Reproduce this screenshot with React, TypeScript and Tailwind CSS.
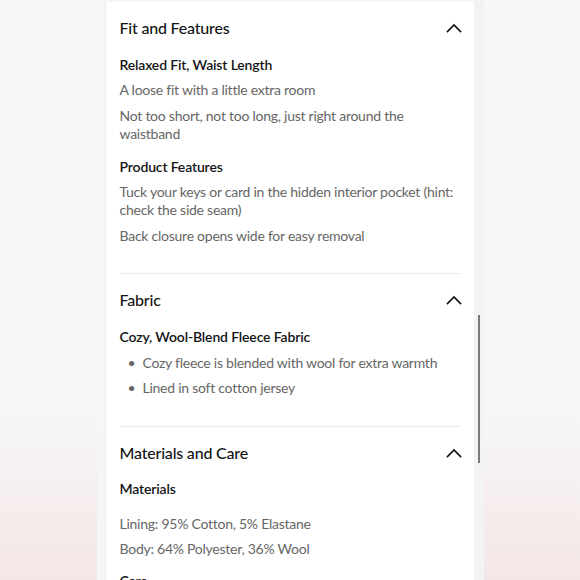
import React from "react";

function Chevron() {
  return (
    <svg width="16" height="10" viewBox="0 0 16 10" fill="none" className="shrink-0">
      <path d="M1.5 8.5 L8 2 L14.5 8.5" stroke="#111" strokeWidth="1.6" strokeLinecap="square" />
    </svg>
  );
}

function Header({ title, mt }: { title: string; mt: string }) {
  return (
    <div className={`flex items-center justify-between h-[24px] ${mt}`}>
      <span className="text-[16px] leading-[24px] font-medium tracking-[-0.2px] text-[#141414]">{title}</span>
      <span className="-mr-[2px]">
        <Chevron />
      </span>
    </div>
  );
}

const body = "text-[14px] leading-[18px] tracking-[-0.25px] text-[#666]";
const sub = "text-[14px] leading-[20px] font-semibold tracking-[-0.15px] text-[#141414]";

export default function App() {
  const font = { fontFamily: "Lato, 'Noto Sans', sans-serif" };
  return (
    <div
      className="w-[580px] h-[580px] overflow-hidden flex justify-center bg-[linear-gradient(180deg,#f8f8f8_0%,#f7f7f7_70%,#f4e6e6_100%)]"
      style={font}
    >
      <div className="w-[387px] h-full flex bg-[#f6f6f6] pl-[8px]">
        <div className="w-[369px] h-full mt-[2px] bg-white border-l border-[#ececec] px-[14px] shrink-0">
          <Header title="Fit and Features" mt="mt-[14px]" />
          <div className={`mt-[15px] ${sub}`}>Relaxed Fit, Waist Length</div>
          <p className={`mt-[6px] ${body}`}>A loose fit with a little extra room</p>
          <p className={`mt-[8px] ${body}`}>Not too short, not too long, just right around the waistband</p>
          <div className={`mt-[14px] ${sub}`}>Product Features</div>
          <p className={`mt-[6px] ${body}`}>Tuck your keys or card in the hidden interior pocket (hint: check the side seam)</p>
          <p className={`mt-[8px] ${body}`}>Back closure opens wide for easy removal</p>
          <div className="mt-[28px] h-px bg-[#ebebeb]" />

          <Header title="Fabric" mt="mt-[14px]" />
          <div className={`mt-[15px] ${sub}`}>Cozy, Wool-Blend Fleece Fabric</div>
          <ul className="mt-[7px] flex flex-col gap-[7px]">
            <li className={`flex ${body}`}>
              <span className="w-[23px] pl-[8px]">•</span>Cozy fleece is blended with wool for extra warmth
            </li>
            <li className={`flex ${body}`}>
              <span className="w-[23px] pl-[8px]">•</span>Lined in soft cotton jersey
            </li>
          </ul>
          <div className="mt-[29px] h-px bg-[#ebebeb]" />

          <Header title="Materials and Care" mt="mt-[14px]" />
          <div className={`mt-[14px] ${sub}`}>Materials</div>
          <p className={`mt-[16px] ${body}`}>Lining: 95% Cotton, 5% Elastane</p>
          <p className={`mt-[7px] ${body}`}>Body: 64% Polyester, 36% Wool</p>
          <div className={`mt-[13px] ${sub}`}>Care</div>
        </div>
        <div className="w-[10px] h-full bg-[#f3f3f3] flex flex-col">
          <div className="h-[315px]" />
          <div className="ml-[4px] w-[2px] h-[148px] bg-[#7a7a7a]" />
        </div>
      </div>
    </div>
  );
}
